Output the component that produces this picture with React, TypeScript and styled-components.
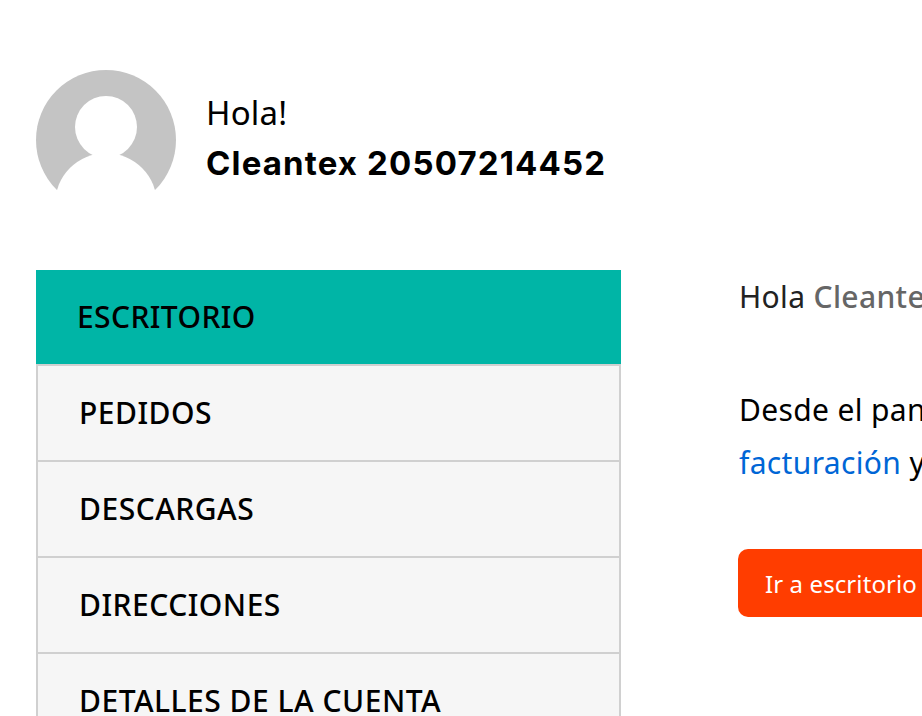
import styled, { createGlobalStyle } from "styled-components";

const menu = ["PEDIDOS", "DESCARGAS", "DIRECCIONES", "DETALLES DE LA CUENTA"];

function App() {
  return (
    <Page>
      <GlobalStyle />
      <Profile>
        <Avatar viewBox="0 0 140 130" aria-hidden="true">
          <circle cx="70" cy="70" r="70" fill="#c4c4c4" />
          <circle cx="70" cy="57" r="31" fill="#fff" />
          <circle cx="70" cy="134" r="51" fill="#fff" />
          <rect x="0" y="120" width="140" height="10" fill="#fff" />
        </Avatar>
        <Greeting>
          <Hello>Hola!</Hello>
          <UserName>Cleantex 20507214452</UserName>
        </Greeting>
      </Profile>
      <Columns>
        <Nav>
          <ActiveItem>ESCRITORIO</ActiveItem>
          {menu.map((item) => (
            <MenuItem key={item}>{item}</MenuItem>
          ))}
        </Nav>
        <Content>
          <Line>
            Hola <Strong>Cleantex 20507214452</Strong>
          </Line>
          <Paragraph>
            Desde el panel de control de tu cuenta puedes ver tus pedidos
            <br />
            <BlueLink>facturación</BlueLink> y editar tu cuenta
          </Paragraph>
          <Button>Ir a escritorio</Button>
        </Content>
      </Columns>
    </Page>
  );
}

export default App;

const GlobalStyle = createGlobalStyle`
  html, body {
    margin: 0;
    width: 922px;
    height: 716px;
    overflow: hidden;
    background: #fff;
  }
`;

const Page = styled.div`
  padding: 70px 0 0 36px;
  width: 922px;
  height: 716px;
  box-sizing: border-box;
  overflow: hidden;
  font-family: "Noto Sans", sans-serif;
  color: #000;
`;

const Profile = styled.div`
  display: flex;
  align-items: flex-start;
  gap: 30px;
  height: 200px;
`;

const Avatar = styled.svg`
  width: 140px;
  height: 130px;
  flex: none;
`;

const Greeting = styled.div`
  display: flex;
  flex-direction: column;
  padding-top: 18px;
`;

const Hello = styled.span`
  font-size: 33px;
  line-height: 50px;
  font-weight: 400;
  letter-spacing: 0.2px;
`;

const UserName = styled.span`
  font-family: "Inter", sans-serif;
  font-weight: 700;
  font-size: 33px;
  line-height: 50px;
  letter-spacing: 1.15px;
`;

const Columns = styled.div`
  display: flex;
  gap: 118px;
`;

const Nav = styled.nav`
  width: 585px;
  flex: none;
`;

const ActiveItem = styled.div`
  height: 94px;
  background: #00b5a6;
  display: flex;
  align-items: center;
  padding: 0 0 2px 41px;
  box-sizing: border-box;
  font-size: 30px;
  font-weight: 500;
  letter-spacing: 0.4px;
`;

const MenuItem = styled.div`
  height: 96px;
  box-sizing: border-box;
  background: #f6f6f6;
  border: 2px solid #d0d0d0;
  border-bottom: 0;
  display: flex;
  align-items: center;
  padding: 0 0 2px 41px;
  font-size: 30px;
  font-weight: 500;
  letter-spacing: 0.5px;
`;

const Content = styled.div`
  flex: none;
  white-space: nowrap;
  font-size: 30px;
  letter-spacing: 0.35px;
`;

const Line = styled.p`
  margin: 6px 0 0;
  line-height: 42px;
  color: #222;
`;

const Strong = styled.strong`
  color: #666;
  font-weight: 500;
`;

const Paragraph = styled.p`
  margin: 65px 0 0;
  line-height: 53px;
`;

const BlueLink = styled.a`
  color: #0066d6;
`;

const Button = styled.button`
  display: block;
  margin: 60px 0 0 -1px;
  height: 68px;
  width: 240px;
  border: 0;
  border-radius: 10px;
  background: #ff3d00;
  color: #fff;
  font: 400 24px "Noto Sans", sans-serif;
  letter-spacing: 0.1px;
  text-align: left;
  padding-left: 27px;
`;
